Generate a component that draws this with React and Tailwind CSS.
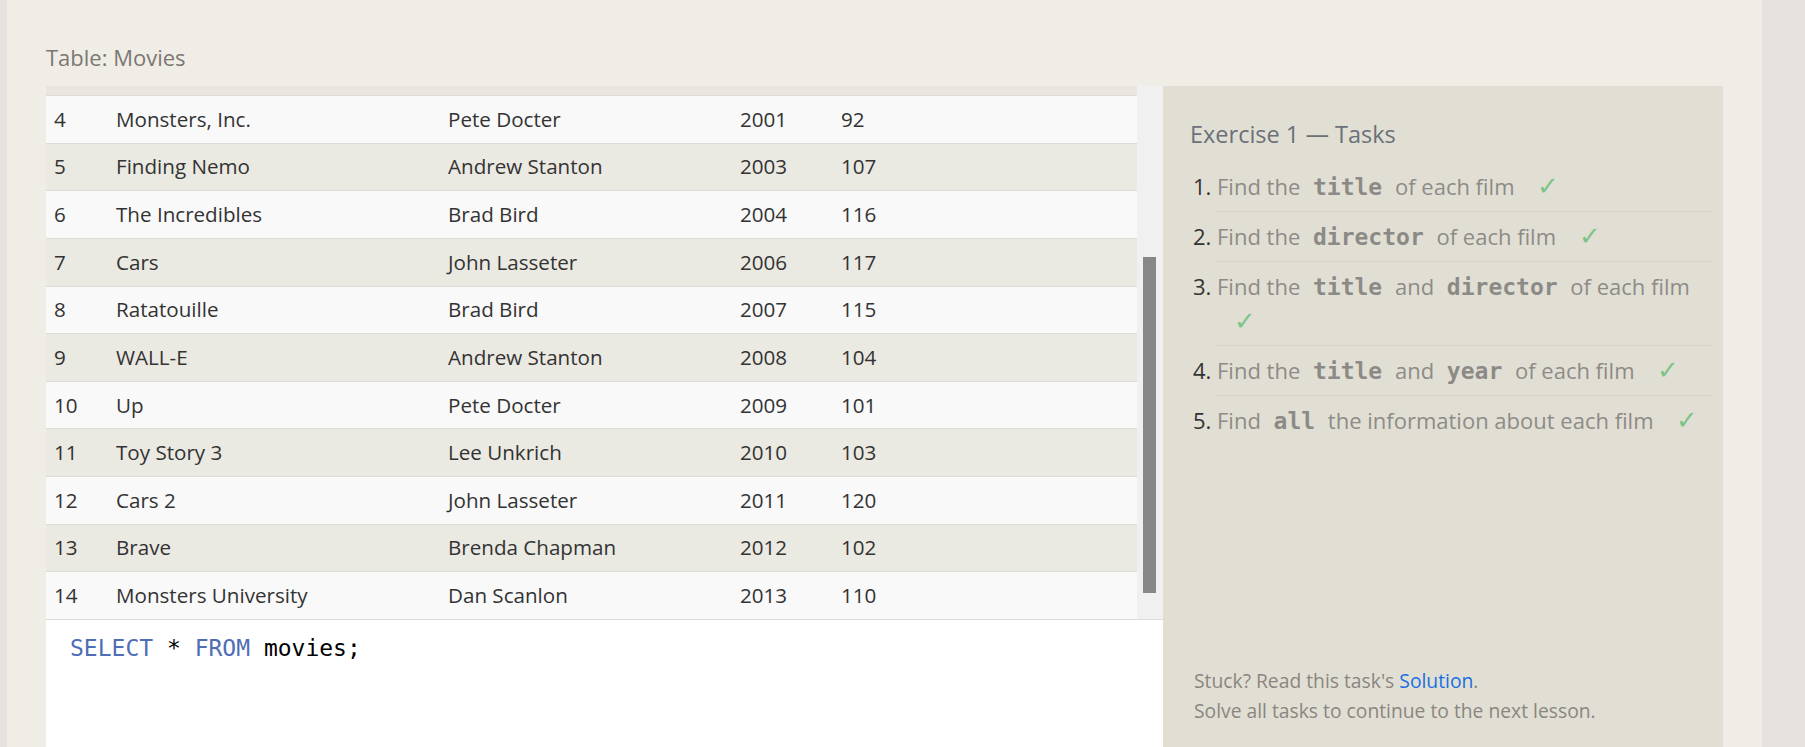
const movies = [
  [4, "Monsters, Inc.", "Pete Docter", 2001, 92],
  [5, "Finding Nemo", "Andrew Stanton", 2003, 107],
  [6, "The Incredibles", "Brad Bird", 2004, 116],
  [7, "Cars", "John Lasseter", 2006, 117],
  [8, "Ratatouille", "Brad Bird", 2007, 115],
  [9, "WALL-E", "Andrew Stanton", 2008, 104],
  [10, "Up", "Pete Docter", 2009, 101],
  [11, "Toy Story 3", "Lee Unkrich", 2010, 103],
  [12, "Cars 2", "John Lasseter", 2011, 120],
  [13, "Brave", "Brenda Chapman", 2012, 102],
  [14, "Monsters University", "Dan Scanlon", 2013, 110],
];

const Code = ({ children }) => (
  <code className="px-[7px] font-bold text-[23px] text-[#8c8a86] font-['DejaVu_Sans_Mono',monospace]">
    {children}
  </code>
);

const Check = () => (
  <span className="ml-[17px] text-[26px] leading-[20px] font-light text-[#7cc487] font-['Noto_Sans',sans-serif]">✓</span>
);

const tasks = [
  <>Find the <Code>title</Code> of each film <Check /></>,
  <>Find the <Code>director</Code> of each film <Check /></>,
  <>Find the <Code>title</Code> and <Code>director</Code> of each film <Check /></>,
  <>Find the <Code>title</Code> and <Code>year</Code> of each film <Check /></>,
  <>Find <Code>all</Code> the information about each film <Check /></>,
];

export default function App() {
  return (
    <div className="flex h-screen overflow-hidden bg-[#e6e2df] font-['Open_Sans',sans-serif]">
      <div className="w-[7px] shrink-0" />
      <div className="flex flex-col w-[1755px] shrink-0 bg-[#f0ede6] pl-[39px] pt-[42px]">
        <h3 className="text-[22px] leading-[30px] text-[#7a7774] mb-[14px]">Table: Movies</h3>
        <div className="flex flex-1 min-h-0">
          {/* table + editor */}
          <div className="w-[1117px] flex flex-col">
            <div className="flex h-[533px]">
              <div className="flex-1 flex flex-col">
                <div className="h-[9px] bg-[#e8e6df]" />
                {movies.map((m, i) => (
                  <div
                    key={m[0]}
                    className={`flex items-center h-[47.64px] border-t border-[#dedcd7] text-[20.6px] text-[#333] ${i % 2 ? "bg-[#eae9e2]" : "bg-[#f9f9f9]"}`}
                  >
                    <div className="w-[62px] pl-[8px]">{m[0]}</div>
                    <div className="w-[332px] pl-[8px]">{m[1]}</div>
                    <div className="w-[292px] pl-[8px]">{m[2]}</div>
                    <div className="w-[101px] pl-[8px]">{m[3]}</div>
                    <div className="flex-1 pl-[8px]">{m[4]}</div>
                  </div>
                ))}
              </div>
              <div className="w-[26px] bg-[#f0f0f0] pt-[171px] pl-[6px] pr-[7px]">
                <div className="h-[336px] bg-[#878787]" />
              </div>
            </div>
            <div className="flex-1 bg-white border-t border-[#dedcd7] pt-[11px] pl-[24px] text-[23px] font-['DejaVu_Sans_Mono',monospace]">
              <span className="text-[#4f6eb5]">SELECT</span>
              <span className="text-black"> * </span>
              <span className="text-[#4f6eb5]">FROM</span>
              <span className="text-black"> movies;</span>
            </div>
          </div>

          {/* tasks */}
          <div className="w-[560px] flex flex-col bg-[#e1dfd4] pl-[27px] pr-[12px] pt-[33px] pb-[21px]">
            <h2 className="text-[23.5px] leading-[30px] text-[#6b7079]">Exercise 1 — Tasks</h2>
            <ol className="mt-[13px] pl-[27px] list-decimal marker:text-[#333]">
              {tasks.map((t, i) => (
                <li key={i} className="py-[7px] leading-[34px] text-[22px] text-[#8e8b87] border-b border-[#d6d4c9] last:border-b-0">
                  {t}
                </li>
              ))}
            </ol>
            <div className="flex-1" />
            <div className="pl-[4px] text-[19.3px] leading-[30px] text-[#8b8580]">
              <p>
                Stuck? Read this task's <a href="#" className="text-[#1a6fe0]">Solution</a>.
              </p>
              <p>Solve all tasks to continue to the next lesson.</p>
            </div>
          </div>
        </div>
      </div>
    </div>
  );
}
